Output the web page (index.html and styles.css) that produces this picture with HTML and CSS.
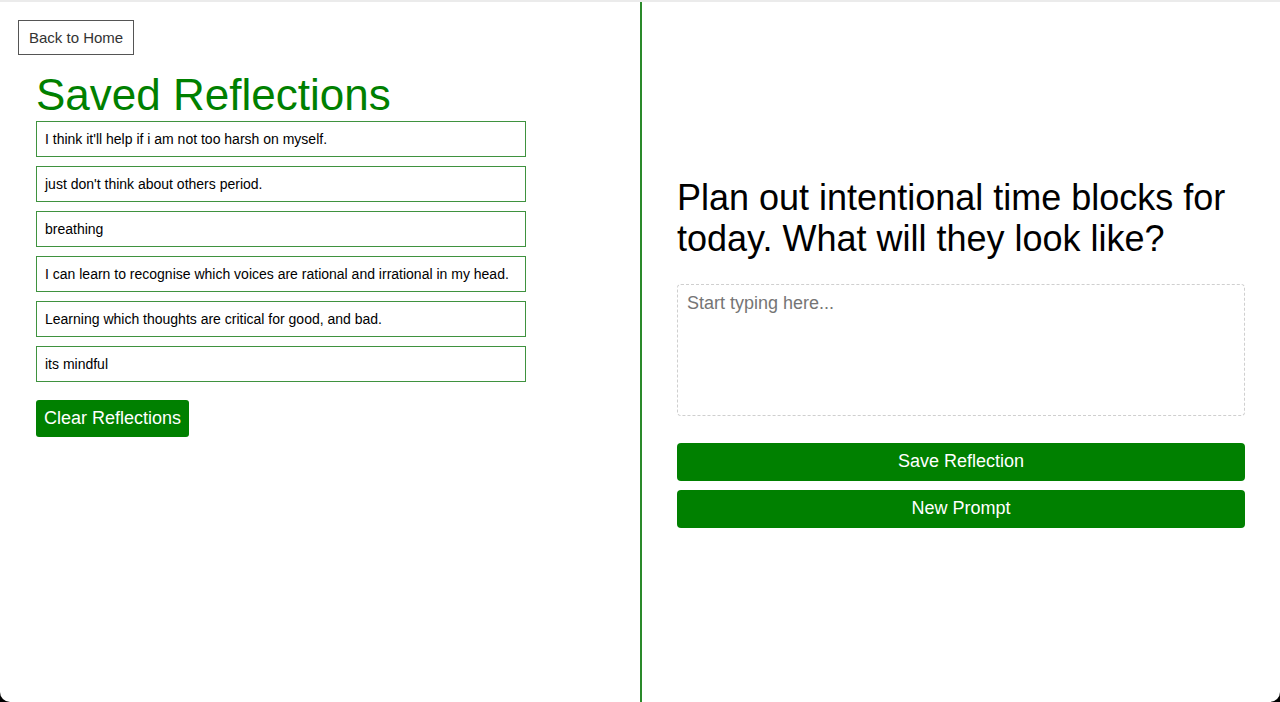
FILE: index.html
```html
<!DOCTYPE html>
<html lang="en">
<head>
<meta charset="utf-8">
<title>Saved Reflections</title>
<link rel="stylesheet" href="styles.css">
</head>
<body>
<div class="app">
  <section class="left">
    <button class="back-btn">Back to Home</button>
    <div class="saved">
      <h1 class="saved-title">Saved Reflections</h1>
      <ul class="reflection-list">
        <li class="reflection">I think it'll help if i am not too harsh on myself.</li>
        <li class="reflection">just don't think about others period.</li>
        <li class="reflection">breathing</li>
        <li class="reflection">I can learn to recognise which voices are rational and irrational in my head.</li>
        <li class="reflection">Learning which thoughts are critical for good, and bad.</li>
        <li class="reflection">its mindful</li>
      </ul>
      <button class="clear-btn">Clear Reflections</button>
    </div>
  </section>
  <section class="right">
    <h2 class="prompt">Plan out intentional time blocks for today. What will they look like?</h2>
    <textarea class="entry" placeholder="Start typing here..."></textarea>
    <div class="actions">
      <button class="action-btn">Save Reflection</button>
      <button class="action-btn">New Prompt</button>
    </div>
  </section>
</div>
</body>
</html>
```

FILE: styles.css
```css
* {
  box-sizing: border-box;
}

html, body {
  margin: 0;
  padding: 0;
  background: #000;
}

body {
  font-family: "Liberation Sans", Arial, Helvetica, sans-serif;
  color: #000;
}

.app {
  display: flex;
  height: 702px;
  background: #fff;
  border-top: 2px solid #ebebeb;
  border-radius: 0 0 10px 10px;
  overflow: hidden;
}

.left {
  width: 640px;
  flex: none;
  padding: 18px 18px 0 18px;
  display: flex;
  flex-direction: column;
  align-items: flex-start;
}

.back-btn {
  font-family: inherit;
  font-size: 15px;
  color: #333;
  background: #fff;
  border: 1px solid #555;
  border-radius: 0;
  padding: 8px 10px;
  line-height: 17px;
}

.saved {
  padding-left: 18px;
  display: flex;
  flex-direction: column;
  align-items: flex-start;
}

.saved-title {
  margin: 14px 0 1px 0;
  font-size: 44px;
  font-weight: normal;
  color: #008000;
  line-height: 51px;
}

.reflection-list {
  list-style: none;
  margin: 0;
  padding: 0;
  display: flex;
  flex-direction: column;
  gap: 9px;
}

.reflection {
  width: 490px;
  height: 36px;
  border: 1px solid #3f923f;
  padding: 0 8px;
  font-size: 14px;
  line-height: 34px;
  white-space: nowrap;
}

.clear-btn {
  margin-top: 18px;
  font-family: inherit;
  font-size: 18px;
  line-height: 21px;
  color: #fff;
  background: #008000;
  border: none;
  border-radius: 3px;
  padding: 8px 8px;
}

.right {
  flex: 1;
  border-left: 2px solid #2a8a2a;
  padding: 0 35px 0 35px;
  display: flex;
  flex-direction: column;
  justify-content: center;
}

.prompt {
  margin: 0;
  font-size: 36px;
  font-weight: normal;
  line-height: 41px;
}

.entry {
  margin-top: 25px;
  width: 100%;
  height: 132px;
  border: 1px dashed #cfcfcf;
  border-radius: 4px;
  padding: 8px 9px;
  font-family: inherit;
  font-size: 18px;
  resize: none;
  outline: none;
}

.entry::placeholder {
  color: #757575;
}

.actions {
  margin-top: 27px;
  display: flex;
  flex-direction: column;
  gap: 9px;
}

.action-btn {
  width: 100%;
  height: 38px;
  font-family: inherit;
  font-size: 18px;
  color: #fff;
  background: #008000;
  border: none;
  border-radius: 4px;
}
```
